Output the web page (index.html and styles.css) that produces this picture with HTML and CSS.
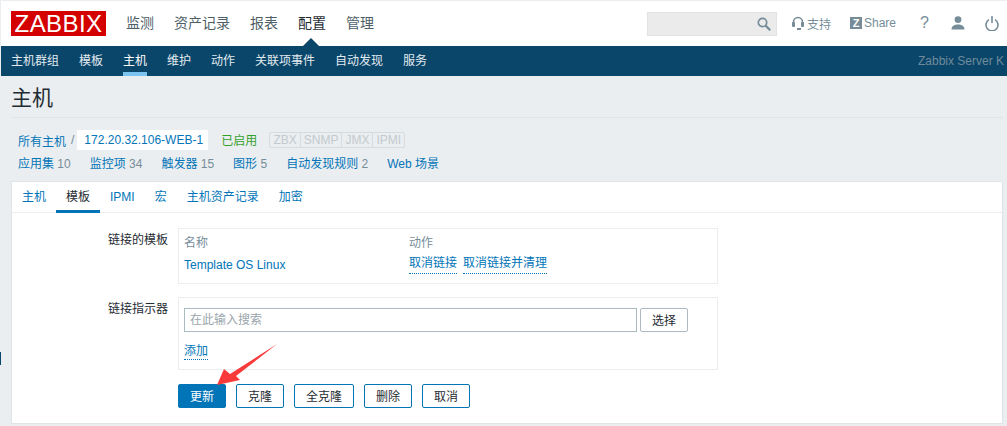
FILE: index.html
```html
<!DOCTYPE html>
<html lang="zh-CN">

<head>
    <meta charset="UTF-8">
    <title>主机</title>
    <link rel="stylesheet" href="styles.css">
</head>

<body>
    <div class="header">
        <div class="logo">ZABBIX</div>
        <ul class="top-menu">
            <li>监测</li>
            <li>资产记录</li>
            <li>报表</li>
            <li class="selected">配置</li>
            <li>管理</li>
        </ul>
        <div class="search">
            <svg width="14" height="14" viewBox="0 0 14 14">
                <circle cx="5.5" cy="5.5" r="4.2" fill="none" stroke="#768d99" stroke-width="1.7" />
                <path d="M8.600 8.600l4.600 4.600" stroke="#768d99" stroke-width="2.200" />
            </svg>
        </div>
        <div class="tool support">
            <svg width="12" height="14" viewBox="0 0 12 14">
                <path d="M1.5 9V6a4.5 4.5 0 0 1 9 0v3" fill="none" stroke="#768d99" stroke-width="1.6" />
                <rect x="0" y="6" width="3" height="5" rx="1" fill="#768d99" />
                <rect x="9" y="6" width="3" height="5" rx="1" fill="#768d99" />
                <rect x="5" y="12" width="4" height="2" fill="#768d99" />
            </svg>
            <span>支持</span>
        </div>
        <div class="tool share"><b>Z</b><span>Share</span></div>
        <div class="tool help">?</div>
        <div class="tool user">
            <svg width="14" height="14" viewBox="0 0 14 14">
                <circle cx="7" cy="3.6" r="3.4" fill="#768d99" />
                <path d="M0.5 13.5c0-3.4 2.6-5 6.5-5s6.5 1.600 6.500 5z" fill="#768d99" />
            </svg>
        </div>
        <div class="tool power">
            <svg width="14" height="15" viewBox="0 0 14 15">
                <path d="M4 3.600a6 6 0 1 0 6 0" fill="none" stroke="#768d99" stroke-width="1.600" />
                <path d="M7 0v7" stroke="#768d99" stroke-width="1.600" />
            </svg>
        </div>
    </div>

    <div class="nav">
        <ul>
            <li>主机群组</li>
            <li>模板</li>
            <li class="selected">主机</li>
            <li>维护</li>
            <li>动作</li>
            <li>关联项事件</li>
            <li>自动发现</li>
            <li>服务</li>
        </ul>
        <div class="server">Zabbix Server K</div>
    </div>

    <div class="main">
        <div class="title">主机</div>

        <div class="crumbs">
            <a class="all">所有主机</a>
            <span class="slash">/</span>
            <a class="current">172.20.32.106-WEB-1</a>
            <span class="enabled">已启用</span>
            <div class="status">
                <span>ZBX</span>
                <span>SNMP</span>
                <span>JMX</span>
                <span>IPMI</span>
            </div>
        </div>

        <ul class="host-links">
            <li><a>应用集</a> 10</li>
            <li><a>监控项</a> 34</li>
            <li><a>触发器</a> 15</li>
            <li><a>图形</a> 5</li>
            <li><a>自动发现规则</a> 2</li>
            <li><a>Web 场景</a></li>
        </ul>

        <div class="card">
            <ul class="tabs">
                <li>主机</li>
                <li class="selected">模板</li>
                <li>IPMI</li>
                <li>宏</li>
                <li>主机资产记录</li>
                <li>加密</li>
            </ul>

            <div class="form">
                <div class="row row-templates">
                    <label>链接的模板</label>
                    <div class="box">
                        <div class="cols head">
                            <span>名称</span>
                            <span>动作</span>
                        </div>
                        <div class="cols">
                            <a>Template OS Linux</a>
                            <span class="actions"><a class="dotted">取消链接</a><a class="dotted">取消链接并清理</a></span>
                        </div>
                    </div>
                </div>

                <div class="row row-indicators">
                    <label>链接指示器</label>
                    <div class="box">
                        <div class="search-row">
                            <div class="input">在此输入搜索</div>
                            <button class="btn-select">选择</button>
                        </div>
                        <a class="dotted add">添加</a>
                    </div>
                </div>

                <div class="buttons">
                    <button class="primary">更新</button>
                    <button>克隆</button>
                    <button>全克隆</button>
                    <button>删除</button>
                    <button>取消</button>
                    <svg class="arrow" width="64" height="46" viewBox="0 0 64 46">
                        <polygon points="2,44 9,28 15,33 62,3 21,35 25,39" fill="#f93a3a" />
                    </svg>
                </div>
            </div>
        </div>
    </div>
</body>

</html>
```

FILE: styles.css
```css
* {
    margin: 0;
    padding: 0;
    box-sizing: border-box;
}

ul {
    list-style: none;
}

html,
body {
    height: 426px;
    overflow: hidden;
}

body {
    padding-top: 1px;
    background-color: #ebeef0;
    font-family: "Liberation Sans", "Noto Sans CJK SC", sans-serif;
    font-size: 12px;
    color: #1f2c33;
    position: relative;
}

/* edge of the window behind */
body::before {
    content: "";
    position: absolute;
    left: 0;
    top: 352px;
    width: 1px;
    height: 13px;
    background-color: #0a466a;
}

a {
    color: #0275b8;
}

/* top bar */
.header {
    display: flex;
    align-items: center;
    height: 45px;
    margin-left: 1px;
    background-color: #fff;
    position: relative;
}

.header::after {
    content: "";
    position: absolute;
    left: 302px;
    bottom: 0;
    border-left: 8px solid transparent;
    border-right: 8px solid transparent;
    border-bottom: 8px solid #0a466a;
}

.logo {
    width: 95px;
    height: 25px;
    margin-left: 10px;
    background-color: #d40000;
    color: #fff;
    font-size: 24px;
    line-height: 25px;
    text-align: center;
    letter-spacing: 0.4px;
}

.top-menu {
    display: flex;
    margin-left: 10px;
    padding-bottom: 3px;
    font-size: 14px;
    color: #4f5f68;
}

.top-menu li {
    padding: 0 10px;
}

.top-menu li.selected {
    color: #1f2c33;
}

.search {
    display: flex;
    align-items: center;
    justify-content: flex-end;
    width: 130px;
    height: 24px;
    margin-left: auto;
    margin-right: 15px;
    padding-right: 5px;
    background-color: #ebebeb;
    border: 1px solid #e3e3e3;
}

.tool {
    display: flex;
    align-items: center;
    padding-bottom: 1px;
    color: #768d99;
}

.support {
    width: 58px;
    gap: 3px;
}

.share {
    width: 69px;
    gap: 2px;
}

.share b {
    width: 12px;
    height: 12px;
    background-color: #768d99;
    color: #fff;
    font-size: 11px;
    line-height: 12px;
    text-align: center;
}

.help {
    width: 32px;
    padding-left: 1px;
    font-size: 16px;
}

.user {
    width: 34px;
}

.power {
    width: 22px;
}

/* second level menu */
.nav {
    display: flex;
    justify-content: space-between;
    align-items: center;
    height: 30px;
    margin-left: 1px;
    background-color: #0a466a;
    color: #e2ebf0;
}

.nav ul {
    display: flex;
    height: 30px;
}

.nav li {
    margin-left: 10px;
    margin-right: 10px;
    line-height: 30px;
}

.nav li.selected {
    color: #fff;
    border-bottom: 4px solid #7cc4f0;
}

.server {
    padding-right: 3px;
    color: #6f8a9b;
}

/* page content */
.main {
    margin-left: 11px;
    margin-right: 4px;
}

.title {
    height: 42px;
    border-bottom: 1px solid #dfe4e7;
    font-size: 21px;
    line-height: 43px;
    font-weight: 400;
}

.crumbs {
    display: flex;
    align-items: center;
    height: 20px;
    margin-top: 12px;
    padding-left: 7px;
}

.slash {
    margin: 0 3px 0 5px;
    color: #768d99;
}

.current {
    width: 131px;
    height: 20px;
    padding-left: 7px;
    background-color: #fff;
    line-height: 21px;
}

.enabled {
    margin-left: 13px;
    padding-bottom: 1px;
    color: #34a02c;
}

.status {
    display: flex;
    height: 16px;
    margin-left: 12px;
    border: 1px solid #d6dbde;
    border-radius: 2px;
    color: #c2cacf;
    line-height: 14px;
}

.status span {
    padding: 0 3px;
    border-left: 1px solid #d6dbde;
}

.status span:first-child {
    border-left: none;
}

.host-links {
    display: flex;
    gap: 19px;
    height: 31px;
    padding-left: 7px;
    line-height: 28px;
    color: #768d99;
}

.card {
    height: 243px;
    background-color: #fff;
    border: 1px solid #dfe4e7;
}

.tabs {
    display: flex;
    height: 31px;
    border-bottom: 1px solid #ebeef0;
    color: #0275b8;
}

.tabs li {
    padding: 0 10px;
    line-height: 31px;
}

.tabs li.selected {
    height: 31px;
    border-bottom: 3px solid #0275b8;
    color: #1f2c33;
}

.form {
    padding-top: 15px;
}

.row {
    display: grid;
    grid-template-columns: 156px 540px;
    column-gap: 10px;
}

.row label {
    padding-top: 2px;
    text-align: right;
}

.box {
    border: 1px solid #ebeef0;
    padding: 5px;
}

.row-templates {
    height: 55px;
}

.row-indicators {
    height: 73px;
    margin-top: 14px;
}

.cols {
    display: grid;
    grid-template-columns: 225px 1fr;
    line-height: 18px;
    margin-bottom: 4px;
}

.head {
    color: #768d99;
}

.actions {
    display: flex;
    gap: 6px;
}

.dotted {
    border-bottom: 1px dotted #0275b8;
    display: inline-block;
    line-height: 15px;
}

.search-row {
    display: flex;
    gap: 3px;
    margin-top: 5px;
}

.input {
    width: 453px;
    height: 24px;
    padding-left: 5px;
    border: 1px solid #acbbc2;
    color: #9aa5ab;
    line-height: 22px;
}

button {
    height: 24px;
    padding: 0 11px 2px;
    background-color: #fff;
    border: 1px solid #0275b8;
    border-radius: 2px;
    font: inherit;
    color: #1f2c33;
}

.btn-select {
    border-color: #acbbc2;
}

.add {
    margin-top: 12px;
}

.buttons {
    display: flex;
    gap: 10px;
    margin-top: 14px;
    margin-left: 166px;
    position: relative;
}

.primary {
    background-color: #0275b8;
    color: #fff;
}

.arrow {
    position: absolute;
    left: 37px;
    top: -43px;
}
```
